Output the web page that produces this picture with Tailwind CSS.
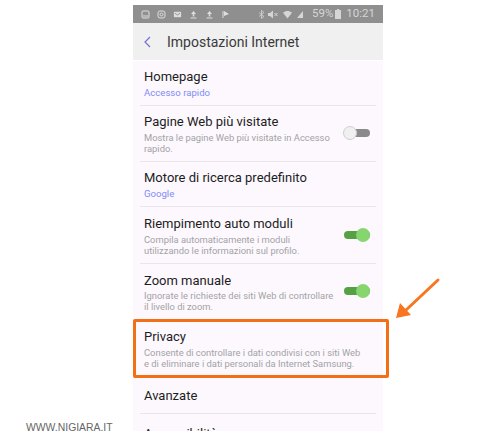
<!DOCTYPE html>
<html lang="en">

<head>
    <meta charset="UTF-8">
    <title>Impostazioni Internet</title>
    <script src="https://cdn.jsdelivr.net/npm/@tailwindcss/browser@4"></script>
</head>

<body class="relative w-[500px] h-[440px] overflow-hidden bg-white font-['Roboto',sans-serif]">

    <div class="ml-[133px] pt-[5px] w-[250px] h-[431px] overflow-hidden">
        <!-- status bar -->
        <div class="flex items-center h-[18px] pl-[8px] pr-[8px] bg-[#8f8f8f] text-[#dedede]">
            <div class="flex items-center gap-[7px]">
                <svg width="9" height="9" viewBox="0 0 9 9" fill="none" stroke="currentColor"><rect x="1" y="1" width="7" height="7" rx="1"/><path d="M2 6h5" /></svg>
                <svg width="9" height="9" viewBox="0 0 9 9" fill="none" stroke="currentColor"><rect x="1" y="1" width="7" height="7" rx="2"/><circle cx="4.5" cy="4.5" r="1.5"/></svg>
                <svg width="9" height="9" viewBox="0 0 10 9" fill="currentColor"><path d="M1 1.500h8v6H1z"/><path d="M2 3l3 2 3-2" stroke="#8f8f8f" fill="none"/></svg>
                <svg width="9" height="9" viewBox="0 0 9 9" fill="currentColor"><path d="M4.500 1L7 4H5.300v2.500H3.700V4H2zM1.500 7.500h6v1h-6z"/></svg>
                <svg width="9" height="9" viewBox="0 0 9 9" fill="currentColor"><path d="M4.500 1L7 4H5.300v2.500H3.700V4H2zM1.500 7.500h6v1h-6z"/></svg>
                <svg width="9" height="9" viewBox="0 0 9 9" fill="currentColor"><path d="M1.500 1h1v7h-1zM3 1l5 3-5 2z"/></svg>
            </div>
            <div class="flex items-center ml-auto opacity-90">
                <svg width="7" height="9" viewBox="0 0 7 9" fill="none" stroke="currentColor" stroke-width=".8"><path d="M1 2.500l5 4-2.500 2v-8L6 2.500l-5 4"/></svg>
                <svg class="ml-[2px]" width="11" height="9" viewBox="0 0 11 9" fill="currentColor"><path d="M1 3h2l3-2.500v8L3 6H1z"/><path d="M7.500 3l3 3m0-3l-3 3" stroke="currentColor" fill="none"/></svg>
                <svg class="ml-[5px]" width="9" height="9" viewBox="0 0 10 9" fill="currentColor"><path d="M0 2.500C3 0 7 0 10 2.500L5 9z"/></svg>
                <svg class="ml-[4px]" width="8" height="9" viewBox="0 0 8 9" fill="currentColor"><path d="M7 1v7H1z"/></svg>
                <span class="ml-[8px] text-[11.500px] leading-none">59%</span>
                <svg class="ml-[2px]" width="6" height="10" viewBox="0 0 6 10" fill="currentColor"><path d="M2 0h2v1h2v9H0V1h2z"/></svg>
                <span class="ml-[5px] text-[11.500px] leading-none">10:21</span>
            </div>
        </div>

        <!-- header -->
        <div class="flex items-center h-[37px] bg-[#f0f0f0]">
            <svg class="ml-[11px]" width="7" height="12" viewBox="0 0 7 12" fill="none" stroke="#6f73d2" stroke-width="1.200"><path d="M6 1L1 6l5 5"/></svg>
            <span class="ml-[16px] text-[14px] leading-none text-[#3a3a3a]">Impostazioni Internet</span>
        </div>

        <!-- list -->
        <div class="mt-px bg-[#fcf8fe] h-full">
            <div class="mx-[7px] pt-[8px]">
                <div class="h-[37px] pl-[4px] border-b border-[#e8e6e9]">
                    <p class="text-[13px] leading-[16px] text-[#1d1d1d]">Homepage</p>
                    <p class="mt-[2px] text-[9.600px] leading-[11px] text-[#7f8cf5]">Accesso rapido</p>
                </div>
                <div class="flex items-center justify-between h-[56px] pl-[4px] pr-[6px] border-b border-[#e8e6e9]">
                    <div>
                        <p class="text-[13px] leading-[16px] text-[#1d1d1d]">Pagine Web più visitate</p>
                        <p class="mt-[2px] w-[195px] text-[9.400px] leading-[11px] text-[#a3a3a3]">Mostra le pagine Web più visitate in Accesso rapido.</p>
                    </div>
                    <div class="relative -mt-[1px] w-[26px] h-[8px] rounded-full bg-[#8a8a8a]">
                        <div class="absolute -left-px -top-[3px] w-[14px] h-[14px] rounded-full bg-[#f0f0f0] border border-[#cfcfcf]"></div>
                    </div>
                </div>
                <div class="h-[45px] pt-[8px] pl-[4px] border-b border-[#e8e6e9]">
                    <p class="text-[13px] leading-[16px] text-[#1d1d1d]">Motore di ricerca predefinito</p>
                    <p class="mt-[2px] text-[9.600px] leading-[11px] text-[#7f8cf5]">Google</p>
                </div>
                <div class="flex items-center justify-between h-[57px] pt-[2px] pl-[4px] pr-[6px] border-b border-[#e8e6e9]">
                    <div>
                        <p class="text-[13px] leading-[16px] text-[#1d1d1d]">Riempimento auto moduli</p>
                        <p class="mt-[2px] w-[195px] text-[9.400px] leading-[11px] text-[#a3a3a3]">Compila automaticamente i moduli<br>utilizzando le informazioni sul profilo.</p>
                    </div>
                    <div class="relative -mt-[2px] w-[26px] h-[8px] rounded-full bg-[#55a143]">
                        <div class="absolute right-0 -top-[3px] w-[14px] h-[14px] rounded-full bg-[#86d56f]"></div>
                    </div>
                </div>
                <div class="flex items-center justify-between h-[56px] pl-[4px] pr-[6px]">
                    <div>
                        <p class="text-[13px] leading-[16px] text-[#1d1d1d]">Zoom manuale</p>
                        <p class="mt-[1px] w-[195px] text-[9.400px] leading-[11px] text-[#a3a3a3]">Ignorate le richieste dei siti Web di controllare il livello di zoom.</p>
                    </div>
                    <div class="relative -mt-[2px] w-[26px] h-[8px] rounded-full bg-[#55a143]">
                        <div class="absolute right-0 -top-[3px] w-[14px] h-[14px] rounded-full bg-[#86d56f]"></div>
                    </div>
                </div>
                <div class="flex flex-col justify-center h-[57px] pl-[4px]">
                    <p class="text-[13px] leading-[16px] text-[#1d1d1d]">Privacy</p>
                    <p class="mt-[2px] text-[9.400px] leading-[11px] text-[#a3a3a3]">Consente di controllare i dati condivisi con i siti Web<br>e di eliminare i dati personali da Internet Samsung.</p>
                </div>
                <div class="flex items-center h-[37px] pt-[1px] pl-[4px] border-b border-[#e8e6e9]">
                    <p class="text-[13px] leading-[16px] text-[#1d1d1d]">Avanzate</p>
                </div>
                <div class="pt-[12px] pl-[4px]">
                    <p class="text-[13px] leading-[16px] text-[#1d1d1d]">Accessibilità</p>
                </div>
            </div>
        </div>
    </div>

    <!-- highlight and arrow lie over the screenshot -->
    <div class="absolute left-[133px] top-[319px] w-[256px] h-[59px] border-[3px] border-[#f36f16] rounded-[2px]"></div>
    <svg class="absolute left-[390px] top-[275px]" width="52" height="50" viewBox="0 0 52 50" fill="#f9761e">
        <path d="M48 5L15 36" stroke="#f9761e" stroke-width="3" stroke-linecap="round"/>
        <path d="M6 43L10 28l11 12z"/>
    </svg>

    <p class="absolute left-[26px] top-[421px] text-[10.400px] leading-[14px] text-[#666] font-['Liberation_Sans',sans-serif]">WWW.NIGIARA.IT</p>

</body>

</html>
